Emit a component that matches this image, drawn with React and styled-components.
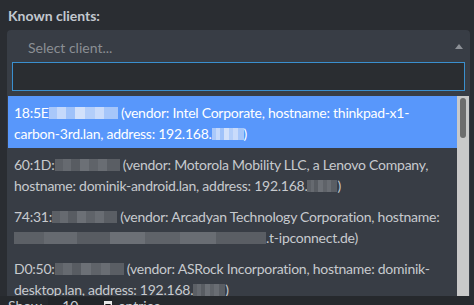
import React from "react";
import styled, { createGlobalStyle } from "styled-components";

const GlobalStyle = createGlobalStyle`
  html, body {
    margin: 0;
    padding: 0;
    background: #2a2d32;
    overflow: hidden;
  }
  body {
    font-family: "Lato", "Noto Sans", sans-serif;
    color: #c8ccd1;
  }
`;

const clients = [
  {
    lines: [
      [["t", "18:5E"], ["b", 69], ["t", " (vendor: Intel Corporate, hostname: thinkpad-x1-"]],
      [["t", "carbon-3rd.lan, address: 192.168."], ["b", 32], ["t", ")"]],
    ],
  },
  {
    lines: [
      [["t", "60:1D:"], ["b", 65], ["t", " (vendor: Motorola Mobility LLC, a Lenovo Company,"]],
      [["t", "hostname: dominik-android.lan, address: 192.168."], ["b", 30], ["t", ")"]],
    ],
  },
  {
    lines: [
      [["t", "74:31:"], ["b", 65], ["t", " (vendor: Arcadyan Technology Corporation, hostname:"]],
      [["b", 252], ["t", ".t-ipconnect.de)"]],
    ],
  },
  {
    lines: [
      [["t", "D0:50:"], ["b", 69], ["t", " (vendor: ASRock Incorporation, hostname: dominik-"]],
      [["t", "desktop.lan, address: 192.168."], ["b", 32], ["t", ")"]],
    ],
  },
];

const App = () => {
  return (
    <>
      <GlobalStyle />
      <Page>
        <Label>Known clients:</Label>
        <SelectBox>
          <Selection>
            <Placeholder>Select client...</Placeholder>
            <Arrow />
          </Selection>
          <SearchWrap>
            <SearchInput type="text" autoFocus />
          </SearchWrap>
          <Results>
            <Options>
              {clients.map((c, i) => (
                <Option key={i} $active={i === 0}>
                  {c.lines.map((line, j) => (
                    <Line key={j}>
                      {line.map(([kind, v], k) =>
                        kind === "t" ? (
                          <span key={k}>{v}</span>
                        ) : (
                          <Mosaic key={k} $active={i === 0} style={{ width: v }} />
                        )
                      )}
                    </Line>
                  ))}
                </Option>
              ))}
            </Options>
            <Scrollbar>
              <Thumb />
            </Scrollbar>
          </Results>
        </SelectBox>
        <EntriesRow>
          <span>Show</span>
          <LengthSelect>
            10
            <LengthCaret />
          </LengthSelect>
          <span>entries</span>
        </EntriesRow>
      </Page>
    </>
  );
};

const Page = styled.div`
  width: 474px;
  height: 305px;
  padding: 0 4px 0 7px;
  box-sizing: border-box;
  overflow: hidden;
`;

const Label = styled.div`
  height: 30px;
  padding-left: 1px;
  display: flex;
  align-items: center;
  font-weight: 700;
  font-size: 14px;
  color: #c3c8cf;
`;

const SelectBox = styled.div`
  width: 463px;
  background: #383d45;
  border-radius: 4px 4px 0 0;
`;

const Selection = styled.div`
  height: 32px;
  display: flex;
  align-items: center;
  justify-content: space-between;
  padding: 2px 7px 0 21px;
  box-sizing: border-box;
`;

const Placeholder = styled.span`
  font-size: 14px;
  color: #8b8f94;
`;

const Arrow = styled.span`
  width: 0;
  height: 0;
  border-left: 4px solid transparent;
  border-right: 4px solid transparent;
  border-bottom: 5px solid #8c9096;
  margin-top: -2px;
`;

const SearchWrap = styled.div`
  padding: 0 5px 5px 5px;
`;

const SearchInput = styled.input`
  display: block;
  width: 100%;
  height: 29px;
  box-sizing: border-box;
  background: #2a2d31;
  border: 1px solid #3a8fce;
  outline: none;
  color: #e0e0e0;
  font-size: 14px;
  padding: 0 6px;
  caret-color: #d8d8d8;
`;

const Results = styled.div`
  display: flex;
  height: 200px;
  margin: 0 1px;
  overflow: hidden;
`;

const Options = styled.div`
  flex: 1;
`;

const Option = styled.div`
  height: 52px;
  box-sizing: border-box;
  padding: 6px 6px 4px 6px;
  background: ${(p) => (p.$active ? "#5897fb" : "#383d45")};
  color: ${(p) => (p.$active ? "#ffffff" : "#c7cace")};
  font-size: 14px;
  letter-spacing: -0.25px;
`;

const Line = styled.div`
  height: 21px;
  line-height: 21px;
  white-space: nowrap;
`;

const Mosaic = styled.span`
  display: inline-block;
  height: 12px;
  vertical-align: -1px;
  background: ${(p) =>
    p.$active
      ? "linear-gradient(90deg, #a9c8fa 0 12%, #c5d9fb 12% 25%, #9fc2fa 25% 38%, #d2e1fb 38% 52%, #b3cefa 52% 66%, #c9dbfb 66% 80%, #a6c6fa 80% 100%)"
      : "linear-gradient(90deg, #5c6066 0 12%, #666a70 12% 25%, #585c62 25% 38%, #6c7076 38% 52%, #5f6369 52% 66%, #696d73 66% 80%, #5a5e64 80% 100%)"};
`;

const Scrollbar = styled.div`
  width: 12px;
  background: #c9c9c9;
  position: relative;
  flex-shrink: 0;
`;

const Thumb = styled.div`
  position: absolute;
  left: 3px;
  top: 2px;
  width: 6px;
  height: 40px;
  border-radius: 3px;
  background: #6d6d6d;
`;

const EntriesRow = styled.div`
  display: flex;
  align-items: center;
  gap: 6px;
  margin-left: -7px;
  padding-left: 8px;
  height: 18px;
  font-size: 14px;
  color: #c8ccd1;
  background: #26292d;
`;

const LengthSelect = styled.div`
  display: flex;
  align-items: center;
  justify-content: space-between;
  width: 64px;
  padding-left: 14px;
  background: #222529;
  box-sizing: border-box;
`;

const LengthCaret = styled.span`
  width: 8px;
  height: 9px;
  background: #e8e8e8;
  position: relative;
  &::after {
    content: "";
    position: absolute;
    left: 1px;
    top: 3px;
    border-left: 3px solid transparent;
    border-right: 3px solid transparent;
    border-top: 4px solid #111;
  }
`;

export default App;
